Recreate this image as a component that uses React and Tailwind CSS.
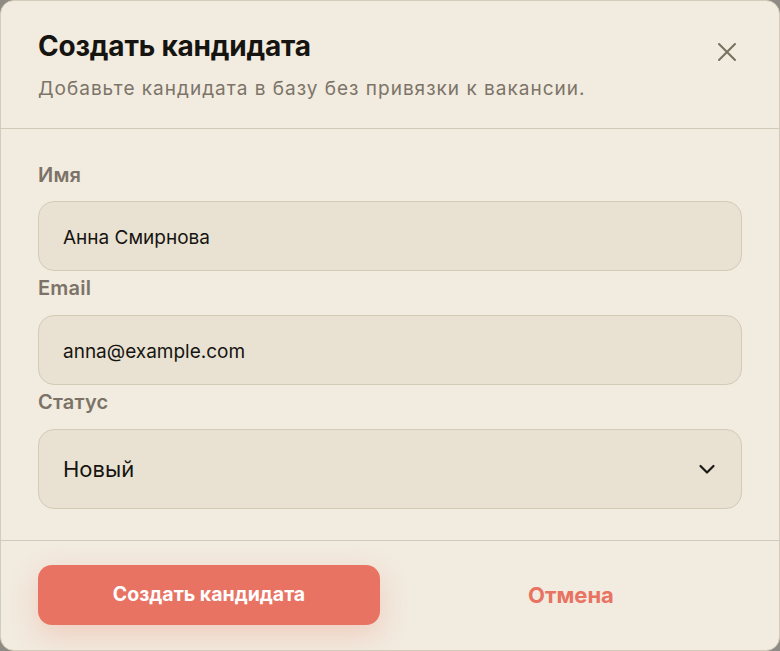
import React, { useState } from "react";

const statuses = ["Новый", "На рассмотрении", "Интервью", "Оффер", "Отказ"];

const CloseIcon = () => (
  <svg width="20" height="20" viewBox="0 0 20 20" fill="none" stroke="currentColor" strokeWidth="2" strokeLinecap="round">
    <path d="M2 2 L18 18 M18 2 L2 18" />
  </svg>
);

const ChevronDown = () => (
  <svg width="18" height="18" viewBox="0 0 18 18" fill="none" stroke="currentColor" strokeWidth="2.2" strokeLinecap="round" strokeLinejoin="round">
    <path d="M2.5 6 L9 12.5 L15.5 6" />
  </svg>
);

const App = () => {
  const [name, setName] = useState("Анна Смирнова");
  const [email, setEmail] = useState("anna@example.com");
  const [status, setStatus] = useState("Новый");

  return (
    <div
      className="w-full h-[651px] bg-[#8e8a84]"
      style={{ fontFamily: "Inter, 'Noto Sans', sans-serif" }}
    >
      <div className="w-full h-full bg-[#f2ebdf] border border-[#d4ccbb] rounded-[14px] flex flex-col overflow-hidden">
        {/* Header */}
        <div className="relative px-[37px] pt-[28px] pb-[25px] border-b border-[#d2c9b8]">
          <h2 className="text-[28px] leading-[34px] font-bold text-[#161410] tracking-[-0.2px]">
            Создать кандидата
          </h2>
          <p className="mt-[12px] text-[19px] leading-[28px] tracking-[1px] text-[#7c7468]">
            Добавьте кандидата в базу без привязки к вакансии.
          </p>
          <button className="absolute right-[42px] top-[41px] text-[#77705f]">
            <CloseIcon />
          </button>
        </div>

        {/* Form */}
        <div className="flex flex-col px-[37px] pt-[34px] pb-[31px] border-b border-[#d2c9b8]">
          <label className="text-[20px] leading-[24px] font-semibold tracking-[0.2px] text-[#7b7367]">Имя</label>
          <input
            value={name}
            onChange={(e) => setName(e.target.value)}
            className="mt-[14px] h-[70px] px-[24px] pt-[3px] rounded-[16px] bg-[#e9e2d3] border border-[#d3cab8] text-[19px] text-[#161410] outline-none"
          />

          <label className="mt-[5px] text-[20px] leading-[24px] font-semibold tracking-[0.2px] text-[#7b7367]">Email</label>
          <input
            value={email}
            onChange={(e) => setEmail(e.target.value)}
            className="mt-[15px] h-[70px] px-[24px] pt-[3px] rounded-[16px] bg-[#e9e2d3] border border-[#d3cab8] text-[19px] text-[#161410] outline-none"
          />

          <label className="mt-[5px] text-[20px] leading-[24px] font-semibold tracking-[0.2px] text-[#7b7367]">Статус</label>
          <div className="relative mt-[15px]">
            <select
              value={status}
              onChange={(e) => setStatus(e.target.value)}
              className="w-full h-[80px] px-[24px] rounded-[16px] bg-[#e9e2d3] border border-[#d3cab8] text-[22px] text-[#161410] outline-none appearance-none"
            >
              {statuses.map((s) => (
                <option key={s}>{s}</option>
              ))}
            </select>
            <span className="absolute right-[26px] top-[31px] text-[#1c1a16] pointer-events-none">
              <ChevronDown />
            </span>
          </div>
        </div>

        {/* Footer */}
        <div className="grid grid-cols-2 gap-[20px] px-[37px] pt-[24px]">
          <button className="h-[60px] rounded-[14px] bg-[#e87363] text-white text-[19.5px] font-bold shadow-[0_10px_28px_rgba(232,115,99,0.25)]">
            Создать кандидата
          </button>
          <button className="h-[60px] text-[#e87363] text-[22px] font-bold">
            Отмена
          </button>
        </div>
      </div>
    </div>
  );
};

export default App;
